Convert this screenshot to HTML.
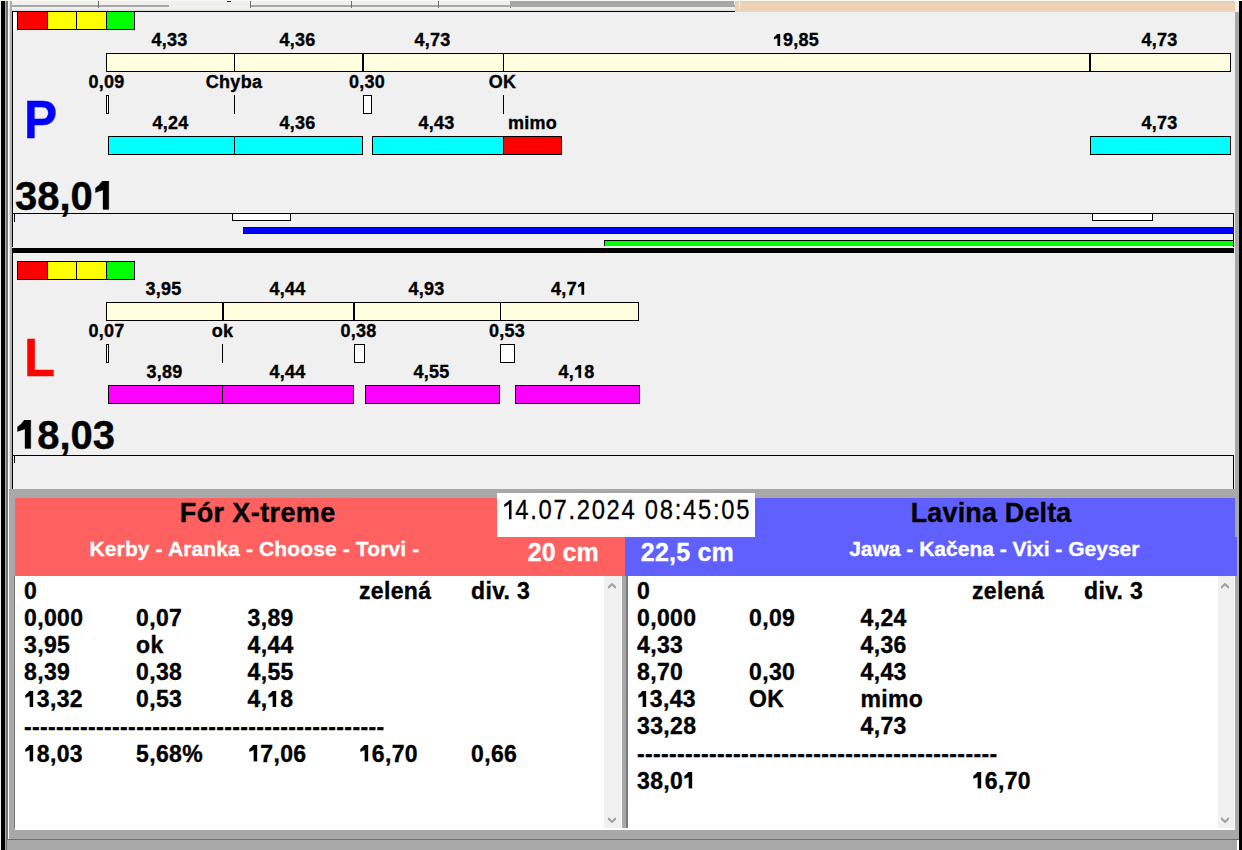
<!DOCTYPE html>
<html><head><meta charset="utf-8"><style>
html,body{margin:0;padding:0;width:1242px;height:850px;overflow:hidden;background:#f0f0f0}
.a{position:absolute;box-sizing:border-box}
.one1{display:inline-block;width:0.556em;height:0.716em;vertical-align:-1px;fill:currentColor}
.one{display:inline-block;width:0.556em;height:0.712em;vertical-align:baseline;fill:currentColor;stroke:currentColor;stroke-width:8}
.t{font-family:"Liberation Sans",sans-serif;white-space:nowrap;-webkit-text-stroke:0.35px currentColor}
</style></head><body>
<div class="a" style="left:0px;top:0px;width:1242px;height:850px;background:#f0f0f0;"></div>
<div class="a" style="left:0px;top:0px;width:1242px;height:11px;background:#f0f0f0;"></div>
<div class="a" style="left:11px;top:5px;width:724px;height:2px;background:#a8a8a8;"></div>
<div class="a" style="left:169px;top:0px;width:81px;height:7px;background:#f0f0f0;"></div>
<div class="a" style="left:98px;top:1px;width:1px;height:7px;background:#707070;"></div>
<div class="a" style="left:250px;top:1px;width:1px;height:7px;background:#707070;"></div>
<div class="a" style="left:351px;top:1px;width:1px;height:7px;background:#707070;"></div>
<div class="a" style="left:438px;top:1px;width:1px;height:7px;background:#707070;"></div>
<div class="a" style="left:510px;top:1px;width:1px;height:7px;background:#707070;"></div>
<div class="a" style="left:510px;top:1px;width:224px;height:6px;background:#a8a8a8;"></div>
<div class="a" style="left:227px;top:1px;width:4px;height:1px;background:#222;"></div>
<div class="a" style="left:735px;top:1px;width:500px;height:11px;background:#f0d0b0;"></div>
<div class="a" style="left:735px;top:1px;width:500px;height:2px;background:#e0ceb8;"></div>
<div class="a" style="left:735px;top:3px;width:500px;height:2px;background:#ead4bc;"></div>
<div class="a" style="left:735px;top:10px;width:500px;height:2px;background:#e8d6c4;"></div>
<div class="a" style="left:739px;top:1px;width:1px;height:8px;background:#fffaf0;"></div>
<div class="a" style="left:0px;top:0px;width:1242px;height:1px;background:#fafaf2;"></div>
<div class="a" style="left:11px;top:9px;width:724px;height:2px;background:#e4e4e4;"></div>
<div class="a" style="left:1px;top:1px;width:4px;height:849px;background:#000;"></div>
<div class="a" style="left:5px;top:1px;width:1px;height:849px;background:#a8a8a8;"></div>
<div class="a" style="left:6px;top:1px;width:2px;height:849px;background:#737373;"></div>
<div class="a" style="left:8px;top:1px;width:1px;height:849px;background:#ffffff;"></div>
<div class="a" style="left:9px;top:1px;width:1px;height:849px;background:#e0e0e0;"></div>
<div class="a" style="left:10px;top:1px;width:2px;height:849px;background:#b0b0b0;"></div>
<div class="a" style="left:1235px;top:12px;width:4px;height:838px;background:#a8a8a8;"></div>
<div class="a" style="left:1239px;top:1px;width:3px;height:849px;background:#000;"></div>
<div class="a" style="left:12px;top:11px;width:723px;height:1px;background:#000;"></div>
<div class="a" style="left:12px;top:11px;width:1px;height:236px;background:#000;"></div>
<div class="a" style="left:13px;top:12px;width:4px;height:18px;background:#fff;"></div>
<div class="a" style="left:17px;top:11px;width:118px;height:19px;background:#000;"></div>
<div class="a" style="left:18px;top:12px;width:29px;height:17px;background:#ff0000;"></div>
<div class="a" style="left:48px;top:12px;width:28px;height:17px;background:#ffff00;"></div>
<div class="a" style="left:77px;top:12px;width:29px;height:17px;background:#ffff00;"></div>
<div class="a" style="left:107px;top:12px;width:27px;height:17px;background:#00ff00;"></div>
<div class="a" style="left:106px;top:53px;width:1125px;height:19px;background:#ffffe0;box-sizing:border-box;border:1px solid #000;"></div>
<div class="a" style="left:234px;top:53px;width:1px;height:19px;background:#000;"></div>
<div class="a" style="left:362px;top:53px;width:2px;height:19px;background:#000;"></div>
<div class="a" style="left:503px;top:53px;width:1px;height:19px;background:#000;"></div>
<div class="a" style="left:1089px;top:53px;width:2px;height:19px;background:#000;"></div>
<div class="a t" style="left:-130.5px;width:600px;text-align:center;top:31.36px;font-size:18px;line-height:18px;font-weight:bold;color:#000;letter-spacing:0.3px;">4,33</div>
<div class="a t" style="left:-2.5px;width:600px;text-align:center;top:31.36px;font-size:18px;line-height:18px;font-weight:bold;color:#000;letter-spacing:0.3px;">4,36</div>
<div class="a t" style="left:132.5px;width:600px;text-align:center;top:31.36px;font-size:18px;line-height:18px;font-weight:bold;color:#000;letter-spacing:0.3px;">4,73</div>
<div class="a t" style="left:496px;width:600px;text-align:center;top:31.36px;font-size:18px;line-height:18px;font-weight:bold;color:#000;letter-spacing:0.3px;"><svg class="one" viewBox="0 0 556 712"><path d="M395 0L395 712L250 712L250 222L62 290L62 172Q165 110 232 0Z"/></svg>9,85</div>
<div class="a t" style="left:859.5px;width:600px;text-align:center;top:31.36px;font-size:18px;line-height:18px;font-weight:bold;color:#000;letter-spacing:0.3px;">4,73</div>
<div class="a t" style="left:-193.5px;width:600px;text-align:center;top:73.36px;font-size:18px;line-height:18px;font-weight:bold;color:#000;letter-spacing:0.3px;">0,09</div>
<div class="a t" style="left:-66px;width:600px;text-align:center;top:73.36px;font-size:18px;line-height:18px;font-weight:bold;color:#000;letter-spacing:0.3px;">Chyba</div>
<div class="a t" style="left:67px;width:600px;text-align:center;top:73.36px;font-size:18px;line-height:18px;font-weight:bold;color:#000;letter-spacing:0.3px;">0,30</div>
<div class="a t" style="left:202.5px;width:600px;text-align:center;top:73.36px;font-size:18px;line-height:18px;font-weight:bold;color:#000;letter-spacing:0.3px;">OK</div>
<div class="a" style="left:106px;top:95px;width:3px;height:19px;background:#fff;box-sizing:border-box;border:1px solid #000;"></div>
<div class="a" style="left:234px;top:95px;width:1px;height:19px;background:#000;"></div>
<div class="a" style="left:363px;top:95px;width:9px;height:19px;background:#fff;box-sizing:border-box;border:1px solid #000;"></div>
<div class="a" style="left:503px;top:95px;width:1px;height:19px;background:#000;"></div>
<div class="a" style="left:108px;top:136px;width:127px;height:19px;background:#00ffff;box-sizing:border-box;border:1px solid #000;"></div>
<div class="a" style="left:234px;top:136px;width:129px;height:19px;background:#00ffff;box-sizing:border-box;border:1px solid #000;"></div>
<div class="a" style="left:372px;top:136px;width:132px;height:19px;background:#00ffff;box-sizing:border-box;border:1px solid #000;"></div>
<div class="a" style="left:503px;top:136px;width:59px;height:19px;background:#ff0000;box-sizing:border-box;border:1px solid #000;"></div>
<div class="a" style="left:1090px;top:136px;width:141px;height:19px;background:#00ffff;box-sizing:border-box;border:1px solid #000;"></div>
<div class="a t" style="left:-129.5px;width:600px;text-align:center;top:113.56px;font-size:18px;line-height:18px;font-weight:bold;color:#000;letter-spacing:0.3px;">4,24</div>
<div class="a t" style="left:-2.5px;width:600px;text-align:center;top:113.56px;font-size:18px;line-height:18px;font-weight:bold;color:#000;letter-spacing:0.3px;">4,36</div>
<div class="a t" style="left:136.5px;width:600px;text-align:center;top:113.56px;font-size:18px;line-height:18px;font-weight:bold;color:#000;letter-spacing:0.3px;">4,43</div>
<div class="a t" style="left:232.5px;width:600px;text-align:center;top:113.56px;font-size:18px;line-height:18px;font-weight:bold;color:#000;letter-spacing:0.3px;">mimo</div>
<div class="a t" style="left:859.5px;width:600px;text-align:center;top:113.56px;font-size:18px;line-height:18px;font-weight:bold;color:#000;letter-spacing:0.3px;">4,73</div>
<div class="a t" style="left:24.3px;top:92.91px;font-size:53.5px;line-height:53.5px;font-weight:bold;color:#0000ff;transform:scaleX(0.93);transform-origin:0 0;">P</div>
<div class="a t" style="left:15px;top:175.54px;font-size:40px;line-height:40px;font-weight:bold;color:#000;">38,0<svg class="one" viewBox="0 0 556 712"><path d="M395 0L395 712L250 712L250 222L62 290L62 172Q165 110 232 0Z"/></svg></div>
<div class="a" style="left:12px;top:213px;width:1222px;height:1px;background:#000;"></div>
<div class="a" style="left:1233px;top:213px;width:1px;height:34px;background:#000;"></div>
<div class="a" style="left:14px;top:214px;width:1px;height:8px;background:#000;"></div>
<div class="a" style="left:232px;top:213px;width:59px;height:8px;background:#fff;box-sizing:border-box;border:1px solid #000;"></div>
<div class="a" style="left:1092px;top:213px;width:61px;height:8px;background:#fff;box-sizing:border-box;border:1px solid #000;"></div>
<div class="a" style="left:243px;top:227px;width:991px;height:7px;background:#0000ff;box-sizing:border-box;border:solid #000080; border-width:1px 0;"></div>
<div class="a" style="left:604px;top:240px;width:630px;height:6px;background:#00ff00;box-sizing:border-box;border:solid #000;border-width:1px 1px 0 1px;"></div>
<div class="a" style="left:12px;top:248px;width:1222px;height:5px;background:#000;"></div>
<div class="a" style="left:12px;top:253px;width:1px;height:236px;background:#000;"></div>
<div class="a" style="left:17px;top:261px;width:118px;height:19px;background:#000;"></div>
<div class="a" style="left:18px;top:262px;width:29px;height:17px;background:#ff0000;"></div>
<div class="a" style="left:48px;top:262px;width:28px;height:17px;background:#ffff00;"></div>
<div class="a" style="left:77px;top:262px;width:29px;height:17px;background:#ffff00;"></div>
<div class="a" style="left:107px;top:262px;width:27px;height:17px;background:#00ff00;"></div>
<div class="a" style="left:106px;top:302px;width:533px;height:19px;background:#ffffe0;box-sizing:border-box;border:1px solid #000;"></div>
<div class="a" style="left:222px;top:302px;width:2px;height:19px;background:#000;"></div>
<div class="a" style="left:353px;top:302px;width:2px;height:19px;background:#000;"></div>
<div class="a" style="left:500px;top:302px;width:1px;height:19px;background:#000;"></div>
<div class="a t" style="left:-136.5px;width:600px;text-align:center;top:280.26px;font-size:18px;line-height:18px;font-weight:bold;color:#000;letter-spacing:0.3px;">3,95</div>
<div class="a t" style="left:-12.5px;width:600px;text-align:center;top:280.26px;font-size:18px;line-height:18px;font-weight:bold;color:#000;letter-spacing:0.3px;">4,44</div>
<div class="a t" style="left:126.5px;width:600px;text-align:center;top:280.26px;font-size:18px;line-height:18px;font-weight:bold;color:#000;letter-spacing:0.3px;">4,93</div>
<div class="a t" style="left:269px;width:600px;text-align:center;top:280.26px;font-size:18px;line-height:18px;font-weight:bold;color:#000;letter-spacing:0.3px;">4,7<svg class="one" viewBox="0 0 556 712"><path d="M395 0L395 712L250 712L250 222L62 290L62 172Q165 110 232 0Z"/></svg></div>
<div class="a t" style="left:-193.5px;width:600px;text-align:center;top:321.66px;font-size:18px;line-height:18px;font-weight:bold;color:#000;letter-spacing:0.3px;">0,07</div>
<div class="a t" style="left:-77.5px;width:600px;text-align:center;top:321.66px;font-size:18px;line-height:18px;font-weight:bold;color:#000;letter-spacing:0.3px;">ok</div>
<div class="a t" style="left:58.5px;width:600px;text-align:center;top:321.66px;font-size:18px;line-height:18px;font-weight:bold;color:#000;letter-spacing:0.3px;">0,38</div>
<div class="a t" style="left:207px;width:600px;text-align:center;top:321.66px;font-size:18px;line-height:18px;font-weight:bold;color:#000;letter-spacing:0.3px;">0,53</div>
<div class="a" style="left:106px;top:344px;width:3px;height:19px;background:#fff;box-sizing:border-box;border:1px solid #000;"></div>
<div class="a" style="left:222px;top:344px;width:1px;height:19px;background:#000;"></div>
<div class="a" style="left:354px;top:344px;width:11px;height:19px;background:#fff;box-sizing:border-box;border:1px solid #000;"></div>
<div class="a" style="left:500px;top:344px;width:15px;height:19px;background:#fff;box-sizing:border-box;border:1px solid #000;"></div>
<div class="a" style="left:108px;top:385px;width:115px;height:19px;background:#ff00ff;box-sizing:border-box;border:1px solid #000;"></div>
<div class="a" style="left:222px;top:385px;width:132px;height:19px;background:#ff00ff;box-sizing:border-box;border:1px solid #000;"></div>
<div class="a" style="left:365px;top:385px;width:135px;height:19px;background:#ff00ff;box-sizing:border-box;border:1px solid #000;"></div>
<div class="a" style="left:515px;top:385px;width:125px;height:19px;background:#ff00ff;box-sizing:border-box;border:1px solid #000;"></div>
<div class="a t" style="left:-135.5px;width:600px;text-align:center;top:363.26px;font-size:18px;line-height:18px;font-weight:bold;color:#000;letter-spacing:0.3px;">3,89</div>
<div class="a t" style="left:-12.5px;width:600px;text-align:center;top:363.26px;font-size:18px;line-height:18px;font-weight:bold;color:#000;letter-spacing:0.3px;">4,44</div>
<div class="a t" style="left:131.5px;width:600px;text-align:center;top:363.26px;font-size:18px;line-height:18px;font-weight:bold;color:#000;letter-spacing:0.3px;">4,55</div>
<div class="a t" style="left:276.5px;width:600px;text-align:center;top:363.26px;font-size:18px;line-height:18px;font-weight:bold;color:#000;letter-spacing:0.3px;">4,<svg class="one" viewBox="0 0 556 712"><path d="M395 0L395 712L250 712L250 222L62 290L62 172Q165 110 232 0Z"/></svg>8</div>
<div class="a t" style="left:24.3px;top:330.91px;font-size:53.5px;line-height:53.5px;font-weight:bold;color:#ff0000;transform:scaleX(0.95);transform-origin:0 0;">L</div>
<div class="a t" style="left:15px;top:414.94px;font-size:40px;line-height:40px;font-weight:bold;color:#000;"><svg class="one" viewBox="0 0 556 712"><path d="M395 0L395 712L250 712L250 222L62 290L62 172Q165 110 232 0Z"/></svg>8,03</div>
<div class="a" style="left:12px;top:455px;width:1222px;height:1px;background:#000;"></div>
<div class="a" style="left:1233px;top:455px;width:1px;height:34px;background:#000;"></div>
<div class="a" style="left:14px;top:456px;width:1px;height:7px;background:#000;"></div>
<div class="a" style="left:12px;top:489px;width:1223px;height:9px;background:#a8a8a8;"></div>
<div class="a" style="left:9px;top:489px;width:6px;height:361px;background:#a8a8a8;"></div>
<div class="a" style="left:15px;top:498px;width:610px;height:78px;background:#ff6060;"></div>
<div class="a" style="left:625px;top:498px;width:610px;height:39px;background:#6060ff;"></div>
<div class="a" style="left:625px;top:537px;width:612px;height:39px;background:#6060ff;"></div>
<div class="a" style="left:497px;top:493px;width:258px;height:44px;background:#fff;"></div>
<div class="a t" style="left:501.6px;top:496.64px;font-size:27px;line-height:27px;font-weight:normal;color:#000;-webkit-text-stroke:0.3px #000;transform:scaleX(0.88);transform-origin:0 0;letter-spacing:1.97px;"><svg class="one1" viewBox="0 0 556 716"><path d="M400 0L400 716L294 716L294 150Q200 220 93 255L93 170Q230 100 320 0Z"/></svg>4.07.2024 08:45:05</div>
<div class="a t" style="left:-42.30000000000001px;width:600px;text-align:center;top:499.64px;font-size:27px;line-height:27px;font-weight:bold;color:#000;letter-spacing:0.4px;">Fór X-treme</div>
<div class="a t" style="left:-45.599999999999994px;width:600px;text-align:center;top:538.02px;font-size:21px;line-height:21px;font-weight:bold;color:#fff;letter-spacing:0.13px;">Kerby - Aranka - Choose - Torvi -</div>
<div class="a t" style="left:263.20000000000005px;width:600px;text-align:center;top:539.54px;font-size:25px;line-height:25px;font-weight:bold;color:#fff;">20 cm</div>
<div class="a t" style="left:691.1px;width:600px;text-align:center;top:499.74px;font-size:27px;line-height:27px;font-weight:bold;color:#000;letter-spacing:0.15px;">Lavina Delta</div>
<div class="a t" style="left:694.3px;width:600px;text-align:center;top:538.22px;font-size:21px;line-height:21px;font-weight:bold;color:#fff;">Jawa - Kačena - Vixi - Geyser</div>
<div class="a t" style="left:387.4px;width:600px;text-align:center;top:539.54px;font-size:25px;line-height:25px;font-weight:bold;color:#fff;letter-spacing:0.2px;">22,5 cm</div>
<div class="a" style="left:15px;top:576px;width:589px;height:252px;background:#fff;"></div>
<div class="a" style="left:14px;top:576px;width:1px;height:252px;background:#777;"></div>
<div class="a" style="left:604px;top:576px;width:17px;height:252px;background:#f0f0f0;"></div>
<div class="a" style="left:621px;top:576px;width:1px;height:252px;background:#fff;"></div>
<div class="a" style="left:622px;top:576px;width:6px;height:252px;background:#a8a8a8;"></div>
<div class="a" style="left:626px;top:576px;width:2px;height:252px;background:#7a7a7a;"></div>
<div class="a" style="left:628px;top:576px;width:590px;height:252px;background:#fff;"></div>
<div class="a" style="left:1218px;top:576px;width:16px;height:252px;background:#f0f0f0;"></div>
<div class="a" style="left:1234px;top:576px;width:1px;height:254px;background:#fff;"></div>
<div class="a" style="left:15px;top:828px;width:1220px;height:2px;background:#fff;"></div>
<div class="a" style="left:9px;top:830px;width:1226px;height:9px;background:#a8a8a8;"></div>
<div class="a" style="left:7px;top:839px;width:1232px;height:1px;background:#6e6e6e;"></div>
<div class="a" style="left:7px;top:840px;width:1230px;height:10px;background:#a8a8a8;"></div>
<div class="a" style="left:1237px;top:840px;width:2px;height:10px;background:#fff;"></div>
<svg class="a" style="left:607.5px;top:582.5px" width="8" height="6"><path d="M0 5 L4 1 L8 5" fill="none" stroke="#a0a0a0" stroke-width="2"/></svg>
<svg class="a" style="left:607.5px;top:817px" width="8" height="6"><path d="M0 1 L4 5 L8 1" fill="none" stroke="#a0a0a0" stroke-width="2"/></svg>
<svg class="a" style="left:1220.5px;top:582.5px" width="8" height="6"><path d="M0 5 L4 1 L8 5" fill="none" stroke="#a0a0a0" stroke-width="2"/></svg>
<svg class="a" style="left:1220.5px;top:817px" width="8" height="6"><path d="M0 1 L4 5 L8 1" fill="none" stroke="#a0a0a0" stroke-width="2"/></svg>
<div class="a t" style="left:24px;top:580.23px;font-size:23px;line-height:23px;font-weight:bold;color:#000;letter-spacing:0.35px;">0</div>
<div class="a t" style="left:359px;top:580.23px;font-size:23px;line-height:23px;font-weight:bold;color:#000;letter-spacing:0.35px;">zelená</div>
<div class="a t" style="left:471px;top:580.23px;font-size:23px;line-height:23px;font-weight:bold;color:#000;letter-spacing:0.35px;">div. 3</div>
<div class="a t" style="left:24px;top:607.28px;font-size:23px;line-height:23px;font-weight:bold;color:#000;letter-spacing:0.35px;">0,000</div>
<div class="a t" style="left:136px;top:607.28px;font-size:23px;line-height:23px;font-weight:bold;color:#000;letter-spacing:0.35px;">0,07</div>
<div class="a t" style="left:247.5px;top:607.28px;font-size:23px;line-height:23px;font-weight:bold;color:#000;letter-spacing:0.35px;">3,89</div>
<div class="a t" style="left:24px;top:634.33px;font-size:23px;line-height:23px;font-weight:bold;color:#000;letter-spacing:0.35px;">3,95</div>
<div class="a t" style="left:136px;top:634.33px;font-size:23px;line-height:23px;font-weight:bold;color:#000;letter-spacing:0.35px;">ok</div>
<div class="a t" style="left:247.5px;top:634.33px;font-size:23px;line-height:23px;font-weight:bold;color:#000;letter-spacing:0.35px;">4,44</div>
<div class="a t" style="left:24px;top:661.38px;font-size:23px;line-height:23px;font-weight:bold;color:#000;letter-spacing:0.35px;">8,39</div>
<div class="a t" style="left:136px;top:661.38px;font-size:23px;line-height:23px;font-weight:bold;color:#000;letter-spacing:0.35px;">0,38</div>
<div class="a t" style="left:247.5px;top:661.38px;font-size:23px;line-height:23px;font-weight:bold;color:#000;letter-spacing:0.35px;">4,55</div>
<div class="a t" style="left:24px;top:688.43px;font-size:23px;line-height:23px;font-weight:bold;color:#000;letter-spacing:0.35px;"><svg class="one" viewBox="0 0 556 712"><path d="M395 0L395 712L250 712L250 222L62 290L62 172Q165 110 232 0Z"/></svg>3,32</div>
<div class="a t" style="left:136px;top:688.43px;font-size:23px;line-height:23px;font-weight:bold;color:#000;letter-spacing:0.35px;">0,53</div>
<div class="a t" style="left:247.5px;top:688.43px;font-size:23px;line-height:23px;font-weight:bold;color:#000;letter-spacing:0.35px;">4,<svg class="one" viewBox="0 0 556 712"><path d="M395 0L395 712L250 712L250 222L62 290L62 172Q165 110 232 0Z"/></svg>8</div>
<div class="a t" style="left:24px;top:715.98px;font-size:23px;line-height:23px;font-weight:bold;color:#000;letter-spacing:0.35px;">---------------------------------------------</div>
<div class="a t" style="left:24px;top:742.53px;font-size:23px;line-height:23px;font-weight:bold;color:#000;letter-spacing:0.35px;"><svg class="one" viewBox="0 0 556 712"><path d="M395 0L395 712L250 712L250 222L62 290L62 172Q165 110 232 0Z"/></svg>8,03</div>
<div class="a t" style="left:136px;top:742.53px;font-size:23px;line-height:23px;font-weight:bold;color:#000;letter-spacing:0.35px;">5,68%</div>
<div class="a t" style="left:247.5px;top:742.53px;font-size:23px;line-height:23px;font-weight:bold;color:#000;letter-spacing:0.35px;"><svg class="one" viewBox="0 0 556 712"><path d="M395 0L395 712L250 712L250 222L62 290L62 172Q165 110 232 0Z"/></svg>7,06</div>
<div class="a t" style="left:359px;top:742.53px;font-size:23px;line-height:23px;font-weight:bold;color:#000;letter-spacing:0.35px;"><svg class="one" viewBox="0 0 556 712"><path d="M395 0L395 712L250 712L250 222L62 290L62 172Q165 110 232 0Z"/></svg>6,70</div>
<div class="a t" style="left:471px;top:742.53px;font-size:23px;line-height:23px;font-weight:bold;color:#000;letter-spacing:0.35px;">0,66</div>
<div class="a t" style="left:637px;top:580.23px;font-size:23px;line-height:23px;font-weight:bold;color:#000;letter-spacing:0.35px;">0</div>
<div class="a t" style="left:972px;top:580.23px;font-size:23px;line-height:23px;font-weight:bold;color:#000;letter-spacing:0.35px;">zelená</div>
<div class="a t" style="left:1084px;top:580.23px;font-size:23px;line-height:23px;font-weight:bold;color:#000;letter-spacing:0.35px;">div. 3</div>
<div class="a t" style="left:637px;top:607.28px;font-size:23px;line-height:23px;font-weight:bold;color:#000;letter-spacing:0.35px;">0,000</div>
<div class="a t" style="left:749px;top:607.28px;font-size:23px;line-height:23px;font-weight:bold;color:#000;letter-spacing:0.35px;">0,09</div>
<div class="a t" style="left:860.5px;top:607.28px;font-size:23px;line-height:23px;font-weight:bold;color:#000;letter-spacing:0.35px;">4,24</div>
<div class="a t" style="left:637px;top:634.33px;font-size:23px;line-height:23px;font-weight:bold;color:#000;letter-spacing:0.35px;">4,33</div>
<div class="a t" style="left:860.5px;top:634.33px;font-size:23px;line-height:23px;font-weight:bold;color:#000;letter-spacing:0.35px;">4,36</div>
<div class="a t" style="left:637px;top:661.38px;font-size:23px;line-height:23px;font-weight:bold;color:#000;letter-spacing:0.35px;">8,70</div>
<div class="a t" style="left:749px;top:661.38px;font-size:23px;line-height:23px;font-weight:bold;color:#000;letter-spacing:0.35px;">0,30</div>
<div class="a t" style="left:860.5px;top:661.38px;font-size:23px;line-height:23px;font-weight:bold;color:#000;letter-spacing:0.35px;">4,43</div>
<div class="a t" style="left:637px;top:688.43px;font-size:23px;line-height:23px;font-weight:bold;color:#000;letter-spacing:0.35px;"><svg class="one" viewBox="0 0 556 712"><path d="M395 0L395 712L250 712L250 222L62 290L62 172Q165 110 232 0Z"/></svg>3,43</div>
<div class="a t" style="left:749px;top:688.43px;font-size:23px;line-height:23px;font-weight:bold;color:#000;letter-spacing:0.35px;">OK</div>
<div class="a t" style="left:860.5px;top:688.43px;font-size:23px;line-height:23px;font-weight:bold;color:#000;letter-spacing:0.35px;">mimo</div>
<div class="a t" style="left:637px;top:715.48px;font-size:23px;line-height:23px;font-weight:bold;color:#000;letter-spacing:0.35px;">33,28</div>
<div class="a t" style="left:860.5px;top:715.48px;font-size:23px;line-height:23px;font-weight:bold;color:#000;letter-spacing:0.35px;">4,73</div>
<div class="a t" style="left:637px;top:743.03px;font-size:23px;line-height:23px;font-weight:bold;color:#000;letter-spacing:0.35px;">---------------------------------------------</div>
<div class="a t" style="left:637px;top:769.58px;font-size:23px;line-height:23px;font-weight:bold;color:#000;letter-spacing:0.35px;">38,0<svg class="one" viewBox="0 0 556 712"><path d="M395 0L395 712L250 712L250 222L62 290L62 172Q165 110 232 0Z"/></svg></div>
<div class="a t" style="left:972px;top:769.58px;font-size:23px;line-height:23px;font-weight:bold;color:#000;letter-spacing:0.35px;"><svg class="one" viewBox="0 0 556 712"><path d="M395 0L395 712L250 712L250 222L62 290L62 172Q165 110 232 0Z"/></svg>6,70</div>
</body></html>
